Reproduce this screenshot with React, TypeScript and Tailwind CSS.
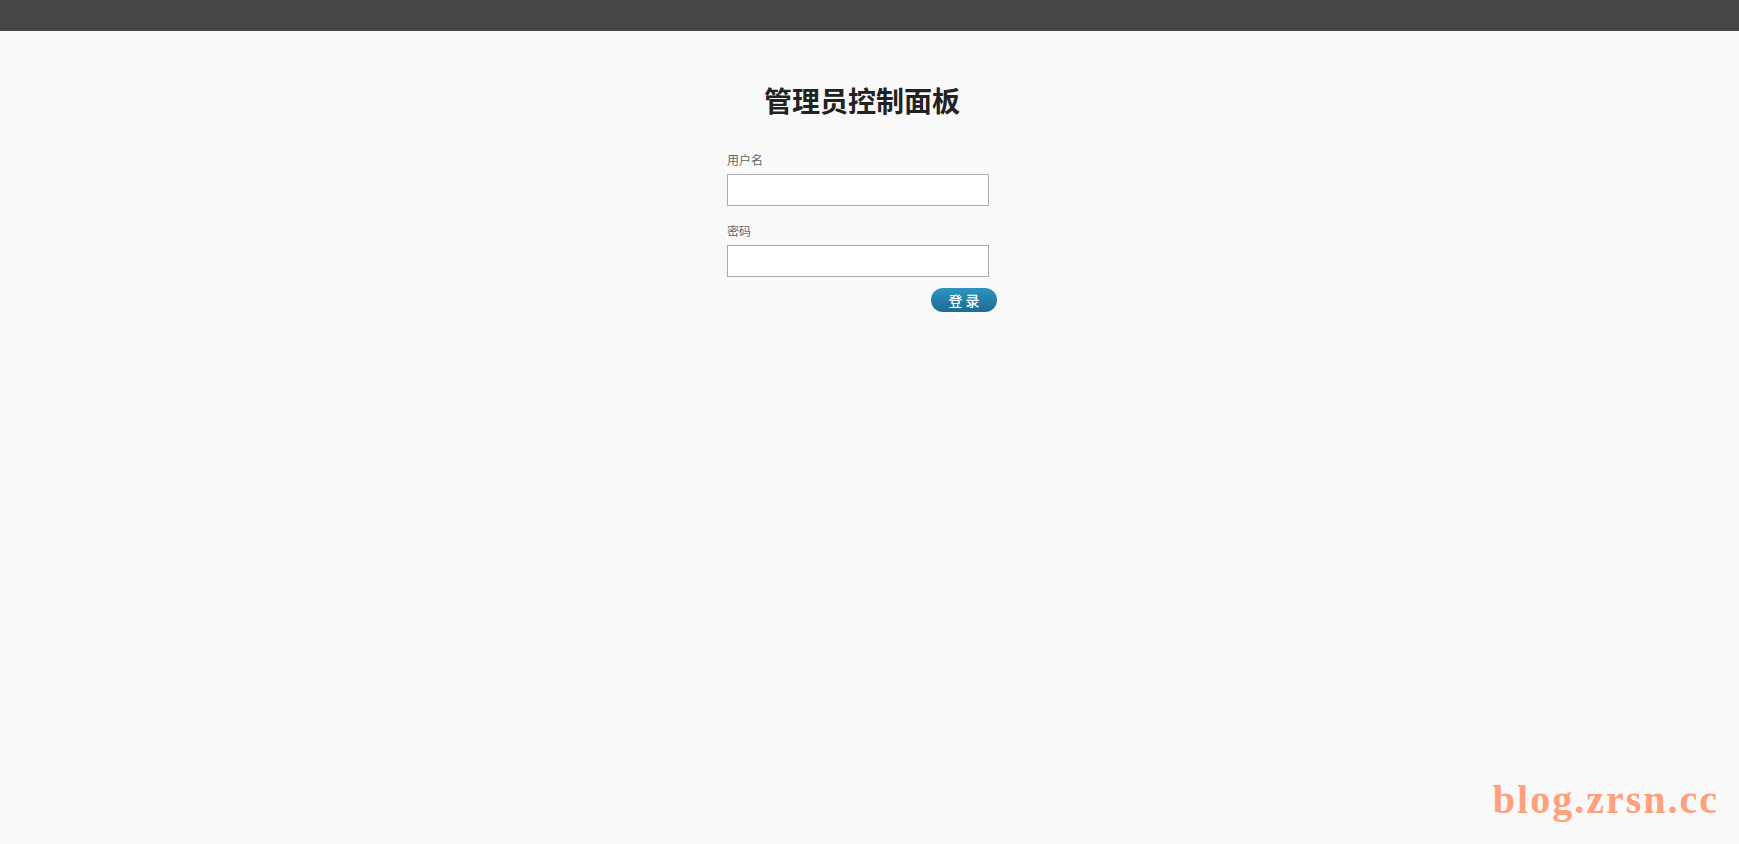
export default function App() {
    return (
        <div className="relative min-h-[844px] bg-[#f9f9f9] font-['Noto_Sans_CJK_SC',sans-serif]">
            <div className="h-[31px] bg-[#464646]" />

            <div className="mx-auto w-[285px] pr-[15px]">
                <h1 className="mt-[52px] text-center text-[28px] leading-[34px] font-bold text-[#222]">
                    管理员控制面板
                </h1>

                <form className="mt-[35px] flex flex-col">
                    <label className="text-[12px] leading-[16px] text-[#666]">用户名</label>
                    <input
                        type="text"
                        className="mt-[6px] h-[32px] w-[262px] border border-[#aaa] bg-white outline-none"
                    />
                    <label className="mt-[17px] text-[12px] leading-[16px] text-[#666]">密码</label>
                    <input
                        type="password"
                        className="mt-[6px] h-[32px] w-[262px] border border-[#aaa] bg-white outline-none"
                    />
                    <div className="mt-[11px] flex justify-end">
                        <button
                            type="button"
                            className="h-[24px] w-[66px] rounded-full bg-gradient-to-b from-[#2f93c2] to-[#1d6b92] text-[14px] leading-[24px] font-medium whitespace-pre text-white"
                        >
                            登 录
                        </button>
                    </div>
                </form>
            </div>

            <div className="absolute right-[20px] bottom-[24px] font-['Liberation_Serif',serif] text-[40px] leading-[40px] font-bold tracking-[2px] text-[#ffa07a]">
                blog.zrsn.cc
            </div>
        </div>
    )
}
